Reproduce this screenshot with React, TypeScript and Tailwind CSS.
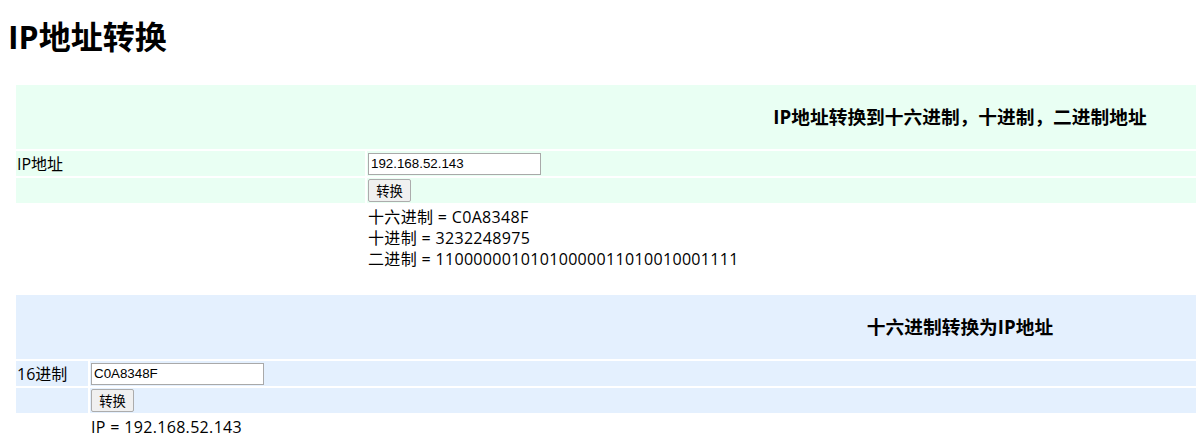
import React from "react";

const font = { fontFamily: '"Open Sans", "Noto Sans CJK SC", sans-serif' };

function Input({ value, w }: { value: string; w: string }) {
  return (
    <input
      readOnly
      value={value}
      className={`${w} h-[22px] border border-[#a9a9a9] bg-white px-[2px] text-[13.33px] text-black outline-none`}
      style={{ fontFamily: '"Liberation Sans", "Noto Sans CJK SC", sans-serif' }}
    />
  );
}

function Btn() {
  return (
    <button
      className="h-[23px] w-[43px] rounded-[2px] border border-[#acacac] bg-[#f0f0f0] text-[13.33px] leading-none text-black"
      style={{ fontFamily: '"Noto Sans CJK SC", sans-serif' }}
    >
      转换
    </button>
  );
}

export default function App() {
  return (
    <div className="w-full overflow-hidden bg-white text-black" style={font}>
      <h1 className="ml-[8px] mt-[16px] mb-[27px] text-[32px] font-bold leading-[42px]">IP地址转换</h1>

      {/* Table 1 */}
      <div className="ml-[16px] grid w-[1888px] grid-cols-[349px_1fr] gap-[2px]">
        <div className="col-span-2 flex h-[64px] items-center justify-center bg-[#e9fff3]">
          <h3 className="text-[18.72px] font-bold">IP地址转换到十六进制，十进制，二进制地址</h3>
        </div>
        <div className="flex h-[25px] items-center bg-[#e9fff3] px-[1px] text-[16px]">IP地址</div>
        <div className="flex h-[25px] items-center bg-[#e9fff3] px-[1px]">
          <Input value="192.168.52.143" w="w-[173px]" />
        </div>
        <div className="h-[25px] bg-[#e9fff3]" />
        <div className="flex h-[25px] items-center bg-[#e9fff3] px-[1px]">
          <Btn />
        </div>
        <div />
        <div className="px-[1px] pt-[2px] pb-[1px] text-[16px] leading-[21px] tracking-[0.33px]">
          <div>十六进制 = C0A8348F</div>
          <div>十进制 = 3232248975</div>
          <div>二进制 = 11000000101010000011010010001111</div>
        </div>
      </div>

      {/* Table 2 */}
      <div className="ml-[16px] mt-[24px] grid w-[1888px] grid-cols-[72px_1fr] gap-[2px]">
        <div className="col-span-2 flex h-[64px] items-center justify-center bg-[#e4f0fe]">
          <h3 className="text-[18.72px] font-bold">十六进制转换为IP地址</h3>
        </div>
        <div className="flex h-[25px] items-center bg-[#e4f0fe] px-[1px] text-[16px]">16进制</div>
        <div className="flex h-[25px] items-center bg-[#e4f0fe] px-[1px]">
          <Input value="C0A8348F" w="w-[173px]" />
        </div>
        <div className="h-[25px] bg-[#e4f0fe]" />
        <div className="flex h-[25px] items-center bg-[#e4f0fe] px-[1px]">
          <Btn />
        </div>
        <div />
        <div className="px-[1px] pt-[2px] text-[16px] leading-[21px] tracking-[0.33px]">IP = 192.168.52.143</div>
      </div>
    </div>
  );
}
